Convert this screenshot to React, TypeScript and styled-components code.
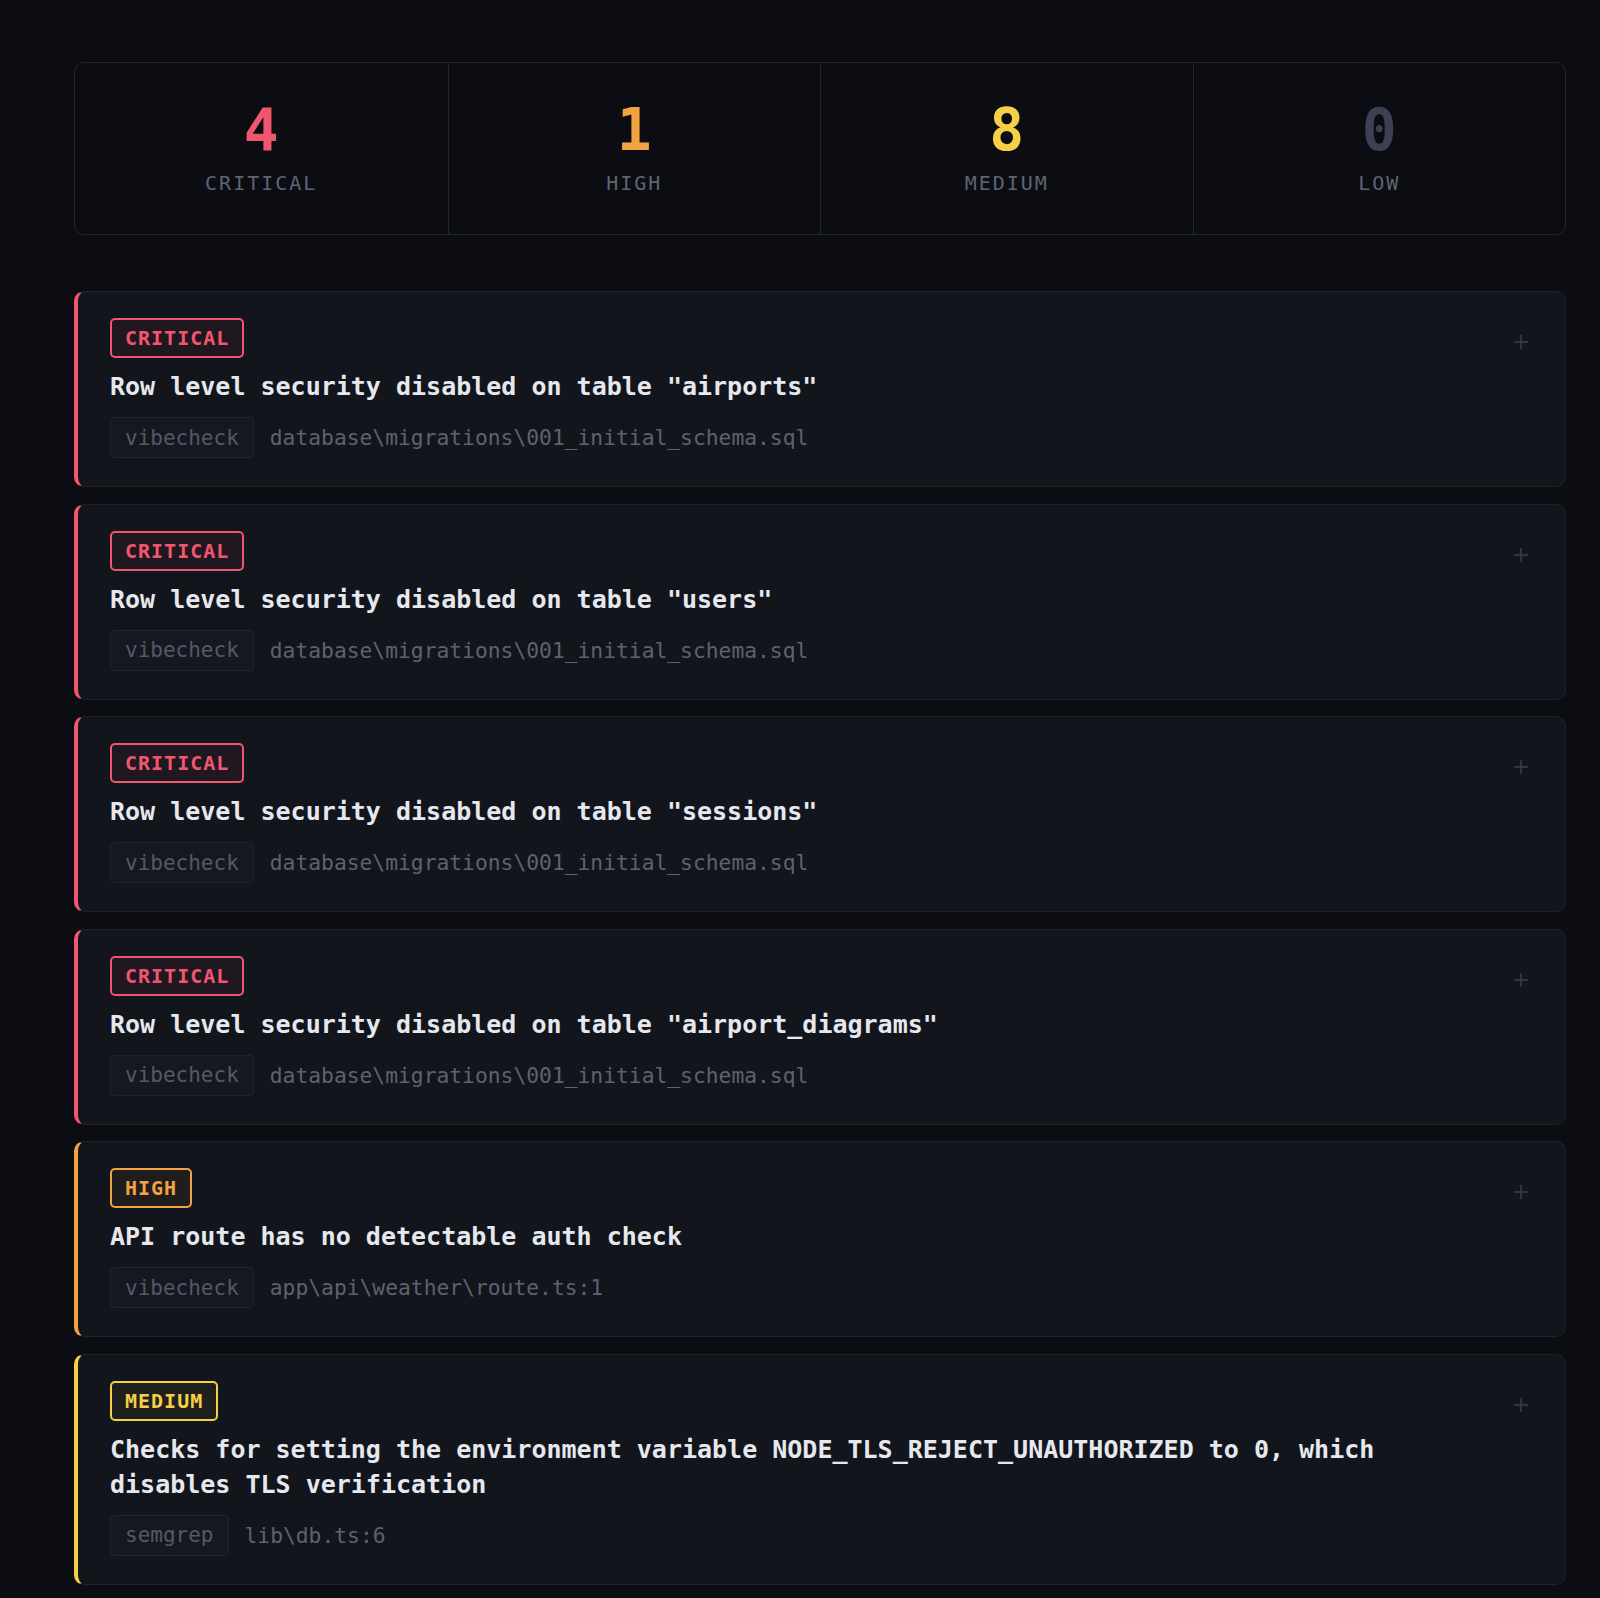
import React from 'react';
import styled, { createGlobalStyle } from 'styled-components';

const colors = {
  page: '#0b0d12',
  panel: '#12151c',
  panelBorder: '#1e222b',
  statsBorder: '#222632',
  text: '#e6e8ee',
  muted: '#5d6270',
  dim: '#545966',
  critical: '#f0566e',
  high: '#f2a240',
  medium: '#f5cf45',
  low: '#3b4055',
};

const mono = `"DejaVu Sans Mono", "Liberation Mono", monospace`;

type Severity = 'critical' | 'high' | 'medium' | 'low';

const GlobalStyle = createGlobalStyle`
    html, body {
        margin: 0;
        padding: 0;
        background: ${colors.page};
        font-family: ${mono};
    }
`;

const Page = styled.div`
    min-height: 1598px;
    box-sizing: border-box;
    padding: 62px 34px 0 74px;
    display: flex;
    flex-direction: column;
    gap: 56px;
`;

const Stats = styled.div`
    display: grid;
    grid-template-columns: repeat(4, 1fr);
    height: 173px;
    box-sizing: border-box;
    border: 1px solid ${colors.statsBorder};
    border-radius: 10px;
    background: #0b0d13;
    overflow: hidden;
`;

const StatCell = styled.div`
    display: flex;
    flex-direction: column;
    align-items: center;
    justify-content: center;
    gap: 14px;
    padding-bottom: 3px;
    & + & {
        border-left: 1px solid ${colors.statsBorder};
    }
`;

const StatNumber = styled.div<{ $color: string }>`
    font-size: 58px;
    line-height: 1;
    font-weight: 700;
    color: ${(p) => p.$color};
`;

const StatLabel = styled.div`
    font-size: 20px;
    line-height: 1;
    letter-spacing: 2px;
    color: #5f6472;
`;

const List = styled.div`
    display: flex;
    flex-direction: column;
    gap: 16.5px;
`;

const Card = styled.div<{ $color: string }>`
    display: flex;
    justify-content: space-between;
    align-items: flex-start;
    box-sizing: border-box;
    padding: 26px 28px 28px 32px;
    background: ${colors.panel};
    border: 1px solid ${colors.panelBorder};
    border-left: 4px solid ${(p) => p.$color};
    border-radius: 10px;
`;

const Body = styled.div`
    display: flex;
    flex-direction: column;
    align-items: flex-start;
`;

const Badge = styled.div<{ $color: string }>`
    height: 40px;
    box-sizing: border-box;
    display: inline-flex;
    align-items: center;
    padding: 0 13px;
    border: 2px solid ${(p) => p.$color};
    border-radius: 5px;
    background: ${(p) => p.$color}10;
    color: ${(p) => p.$color};
    font-size: 20px;
    font-weight: 700;
    letter-spacing: 1px;
`;

const Title = styled.div`
    margin-top: 11px;
    max-width: 1290px;
    font-size: 25px;
    line-height: 35px;
    font-weight: 700;
    color: ${colors.text};
`;

const Meta = styled.div`
    margin-top: 13px;
    display: flex;
    align-items: center;
    gap: 16px;
`;

const Source = styled.span`
    height: 41px;
    box-sizing: border-box;
    display: inline-flex;
    align-items: center;
    padding: 0 14px;
    background: #151820;
    border: 1px solid #20242d;
    border-radius: 4px;
    font-size: 21px;
    color: ${colors.dim};
`;

const Location = styled.span`
    font-size: 21.3px;
    color: ${colors.muted};
`;

const ExpandButton = styled.button`
    width: 32px;
    height: 32px;
    margin-top: 8px;
    padding: 0;
    display: flex;
    align-items: center;
    justify-content: center;
    background: transparent;
    border: none;
    color: #3a3f4b;
    cursor: pointer;
`;

const severityColor: Record<Severity, string> = {
  critical: colors.critical,
  high: colors.high,
  medium: colors.medium,
  low: colors.low,
};

const stats: { label: string; count: number; severity: Severity }[] = [
  { label: 'CRITICAL', count: 4, severity: 'critical' },
  { label: 'HIGH', count: 1, severity: 'high' },
  { label: 'MEDIUM', count: 8, severity: 'medium' },
  { label: 'LOW', count: 0, severity: 'low' },
];

const schema = 'database\\migrations\\001_initial_schema.sql';

const findings: { severity: Severity; title: string; tool: string; location: string }[] = [
  { severity: 'critical', title: 'Row level security disabled on table "airports"', tool: 'vibecheck', location: schema },
  { severity: 'critical', title: 'Row level security disabled on table "users"', tool: 'vibecheck', location: schema },
  { severity: 'critical', title: 'Row level security disabled on table "sessions"', tool: 'vibecheck', location: schema },
  { severity: 'critical', title: 'Row level security disabled on table "airport_diagrams"', tool: 'vibecheck', location: schema },
  { severity: 'high', title: 'API route has no detectable auth check', tool: 'vibecheck', location: 'app\\api\\weather\\route.ts:1' },
  {
    severity: 'medium',
    title: 'Checks for setting the environment variable NODE_TLS_REJECT_UNAUTHORIZED to 0, which disables TLS verification',
    tool: 'semgrep',
    location: 'lib\\db.ts:6',
  },
];

const PlusIcon = () => (
  <svg width="16" height="16" viewBox="0 0 16 16" fill="none" stroke="currentColor" strokeWidth="1.5" strokeLinecap="round">
    <path d="M8 1.5v13M1.5 8h13" />
  </svg>
);

const App = () => {
  return (
    <Page>
      <GlobalStyle />
      <Stats>
        {stats.map((s) => (
          <StatCell key={s.label}>
            <StatNumber $color={severityColor[s.severity]}>{s.count}</StatNumber>
            <StatLabel>{s.label}</StatLabel>
          </StatCell>
        ))}
      </Stats>

      <List>
        {findings.map((f, i) => (
          <Card key={i} $color={severityColor[f.severity]}>
            <Body>
              <Badge $color={severityColor[f.severity]}>{f.severity.toUpperCase()}</Badge>
              <Title>{f.title}</Title>
              <Meta>
                <Source>{f.tool}</Source>
                <Location>{f.location}</Location>
              </Meta>
            </Body>
            <ExpandButton aria-label="Expand">
              <PlusIcon />
            </ExpandButton>
          </Card>
        ))}
      </List>
    </Page>
  );
};

export default App;
